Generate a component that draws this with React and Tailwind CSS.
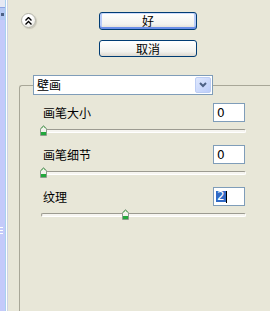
import React from "react";

const cjk = { fontFamily: '"Noto Sans CJK SC", "Noto Sans", sans-serif' };

function Thumb({ left }) {
  // trackbar thumb, points up
  return (
    <svg
      className="absolute top-[3px]"
      style={{ left }}
      width="7"
      height="11"
      viewBox="0 0 7 11"
    >
      <path d="M3.5 0.5 L6.5 3.5 V10.5 H0.5 V3.5 Z" fill="#f2f2ec" stroke="#8c9c8c" />
      <path d="M1.2 3.6 L3.5 1.3 L5.8 3.6" fill="none" stroke="#5cb85c" />
      <rect x="1" y="7" width="5" height="3" fill="#22a83c" />
    </svg>
  );
}

function Row({ label, value, thumb, selected }) {
  return (
    <div className="flex flex-col">
      <div className="flex items-center justify-between h-[19px]">
        <span className="pl-[2px] text-[12px] text-black leading-none" style={cjk}>
          {label}
        </span>
        <div className="w-[32px] h-[19px] mr-[1px] bg-white border border-[#7f9db9] flex items-center pl-[2px]">
          {selected ? (
            <>
              <span
                className="bg-[#316ac5] text-white text-[12px] leading-[11px] px-[1px]"
                style={{ fontFamily: '"DejaVu Sans", sans-serif' }}
              >
                {value}
              </span>
              <span className="w-[1px] h-[12px] bg-black" />
            </>
          ) : (
            <span
              className="text-[12px] leading-none text-black pl-[1px]"
              style={{ fontFamily: '"DejaVu Sans", sans-serif' }}
            >
              {value}
            </span>
          )}
        </div>
      </div>
      <div className="relative h-[23px]">
        <div className="absolute left-0 right-0 top-[7px] h-[4px] rounded-[2px] border border-t-[#9c9b91] border-l-[#9c9b91] border-r-white border-b-white bg-[#f6f5f0]" />
        <Thumb left={thumb} />
      </div>
    </div>
  );
}

export default function App() {
  return (
    <div className="w-[270px] h-[311px] overflow-hidden bg-[#e8e7d8] flex">
      {/* scrollbar edge on the left */}
      <div className="w-[8px] h-full flex shrink-0">
        <div className="w-[5px] flex flex-col">
          <div className="h-[8px] bg-[#e6e9f4] border-b border-[#8ea4e4]" />
          <div className="h-[12px] bg-[#b6c9f5] flex items-center justify-center">
            <div className="w-[3px] h-[3px] bg-[#4d6185]" />
          </div>
          <div className="flex-1 bg-[#c4cafa] flex flex-col">
            <div className="h-[207px]" />
            <div className="w-[3px] h-[1px] bg-white" />
            <div className="h-[2px]" />
            <div className="w-[3px] h-[1px] bg-white" />
            <div className="h-[2px]" />
            <div className="w-[3px] h-[1px] bg-white" />
          </div>
        </div>
        <div className="w-[1px] bg-[#a9d2ee]" />
        <div className="w-[1px] bg-white" />
        <div className="w-[1px] bg-[#cdd3e4]" />
      </div>

      <div className="flex-1 flex flex-col">
        {/* header: collapse + buttons */}
        <div className="flex pt-[12px] pl-[13px]">
          <div className="mt-[1px] w-[15px] h-[15px] rounded-full border border-[#b4b4aa] bg-[radial-gradient(circle_at_40%_35%,#ffffff_40%,#dcdcd2)] shadow-[1px_1px_1px_#c8c6b8] flex items-center justify-center">
            <svg width="7" height="8" viewBox="0 0 7 8">
              <path d="M0.5 3.5 L3.5 0.5 L6.5 3.5 M0.5 7.5 L3.5 4.5 L6.5 7.5" fill="none" stroke="#000" strokeWidth="1.4" />
            </svg>
          </div>
          <div className="ml-[63px] flex flex-col">
            <button
              className="w-[98px] h-[18px] rounded-[3px] border border-[#003c74] bg-[linear-gradient(#ffffff,#f2f2ee_70%,#dcd8cf)] shadow-[inset_0_-2px_0_#6b8ee8,inset_2px_0_0_#b8cbf8,inset_-2px_0_0_#b8cbf8,inset_0_1px_0_#cedcfc] text-[12px] leading-none text-black flex items-center justify-center"
              style={cjk}
            >
              好
            </button>
            <button
              className="mt-[10px] w-[98px] h-[17px] rounded-[3px] border border-[#003c74] bg-[linear-gradient(#ffffff,#f2f2ee_70%,#dcd8cf)] text-[12px] leading-none text-black flex items-center justify-center"
              style={cjk}
            >
              取消
            </button>
          </div>
        </div>

        {/* group box */}
        <div className="mt-[28px] ml-[11px] -mr-[20px] flex-1 border-l border-t border-[#a8a798] rounded-tl-[3px] flex flex-col">
          <div className="ml-[13px] -mt-[11px] w-[180px] h-[20px] bg-white border border-[#7f9db9] flex items-center justify-between p-[1px]">
            <span className="pl-[2px] text-[12px] leading-none text-black" style={cjk}>
              壁画
            </span>
            <div className="w-[16px] h-[16px] rounded-[2px] border border-[#bccdf4] bg-[linear-gradient(135deg,#dfe8fd,#bccdfa)] flex items-center justify-center">
              <svg width="8" height="6" viewBox="0 0 8 6">
                <path d="M1 1 L4 4 L7 1" fill="none" stroke="#4d6185" strokeWidth="2" />
              </svg>
            </div>
          </div>

          <div className="mt-[8px] ml-[21px] w-[205px] flex flex-col">
            <Row label="画笔大小" value="0" thumb={-1} />
            <Row label="画笔细节" value="0" thumb={-1} />
            <Row label="纹理" value="2" thumb={81} selected />
          </div>
        </div>
      </div>
    </div>
  );
}
